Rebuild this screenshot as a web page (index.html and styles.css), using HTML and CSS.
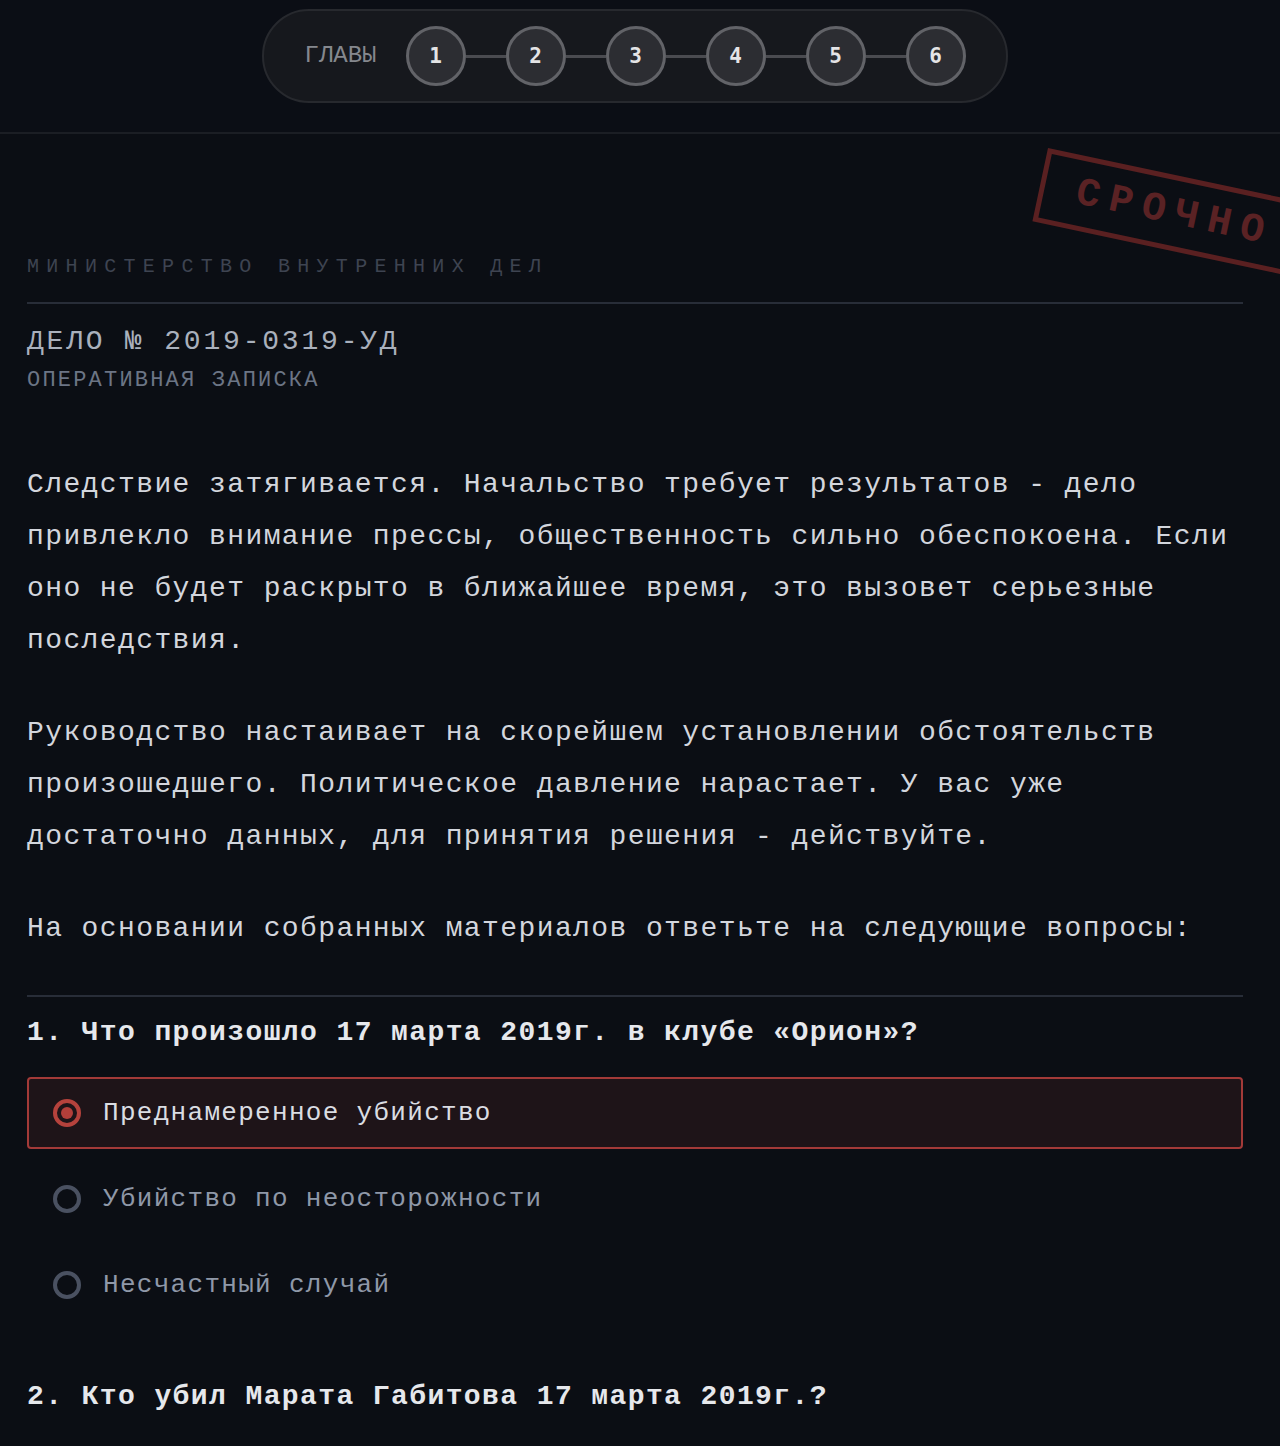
FILE: index.html
```html
<!DOCTYPE html>
<html lang="ru">
<head>
<meta charset="utf-8">
<title>Дело № 2019-0319-УД</title>
<link rel="stylesheet" href="styles.css">
</head>
<body>
<header class="topbar">
  <nav class="chapters">
    <span class="chapters-label">ГЛАВЫ</span>
    <ol class="chapter-list">
      <li class="chapter">1</li>
      <li class="link"></li>
      <li class="chapter">2</li>
      <li class="link"></li>
      <li class="chapter">3</li>
      <li class="link"></li>
      <li class="chapter">4</li>
      <li class="link"></li>
      <li class="chapter">5</li>
      <li class="link"></li>
      <li class="chapter">6</li>
    </ol>
  </nav>
</header>
<main class="doc">
  <div class="stamp"><span class="stamp-text">СРОЧНО</span></div>
  <div class="doc-org">МИНИСТЕРСТВО ВНУТРЕННИХ ДЕЛ</div>
  <div class="doc-case">ДЕЛО № 2019-0319-УД</div>
  <div class="doc-type">ОПЕРАТИВНАЯ ЗАПИСКА</div>

  <p class="doc-text">Следствие затягивается. Начальство требует результатов - дело привлекло внимание прессы, общественность сильно обеспокоена. Если оно не будет раскрыто в ближайшее время, это вызовет серьезные последствия.</p>
  <p class="doc-text">Руководство настаивает на скорейшем установлении обстоятельств произошедшего. Политическое давление нарастает. У вас уже достаточно данных, для принятия решения - действуйте.</p>
  <p class="doc-text">На основании собранных материалов ответьте на следующие вопросы:</p>

  <section class="quiz">
    <div class="question">
      <h2 class="question-title">1. Что произошло 17 марта 2019г. в клубе «Орион»?</h2>
      <div class="options">
        <label class="option selected"><span class="radio"></span><span class="option-text">Преднамеренное убийство</span></label>
        <label class="option"><span class="radio"></span><span class="option-text">Убийство по неосторожности</span></label>
        <label class="option"><span class="radio"></span><span class="option-text">Несчастный случай</span></label>
      </div>
    </div>
    <div class="question">
      <h2 class="question-title">2. Кто убил Марата Габитова 17 марта 2019г.?</h2>
    </div>
  </section>
</main>
</body>
</html>
```
FILE: styles.css
```css
* { box-sizing: border-box; }

html, body {
  margin: 0;
  padding: 0;
  background: #0b0e14;
}

body {
  font-family: "Courier New", "Nimbus Mono PS", "FreeMono", "Liberation Mono", monospace;
  color: #d3d6dd;
  overflow-x: hidden;
}

.topbar {
  height: 134px;
  padding: 9px 10px 0 0;
  border-bottom: 2px solid #1b1e24;
  display: flex;
  justify-content: center;
  align-items: flex-start;
  background: #0b0e15;
}

.chapters {
  height: 94px;
  display: flex;
  align-items: center;
  padding: 0 40px 0 40px;
  border: 2px solid #27292e;
  border-radius: 47px;
  background: #16181d;
}

.chapters-label {
  font-size: 24px;
  color: #85888e;
  margin-right: 29px;
  line-height: 1;
}

.chapter-list {
  list-style: none;
  margin: 0;
  padding: 0;
  display: flex;
  align-items: center;
}

.chapter {
  width: 60px;
  height: 60px;
  border-radius: 50%;
  border: 3px solid #626368;
  background: #2c2d32;
  color: #e4e4e6;
  font-family: "DejaVu Sans Mono", monospace;
  font-weight: bold;
  font-size: 21px;
  display: flex;
  align-items: center;
  justify-content: center;
}

.link {
  width: 40px;
  height: 3px;
  background: #4a4b50;
}

.doc {
  position: relative;
  overflow: hidden;
  padding: 116px 37px 60px 27px;
}

.stamp {
  position: absolute;
  left: 1048px;
  top: 14px;
  height: 75px;
  padding: 0 30px 0 32px;
  border: 5px solid #5a2021;
  transform-origin: 0 0;
  transform: rotate(12deg);
  display: flex;
  align-items: center;
}

.stamp-text {
  font-weight: bold;
  font-size: 40px;
  letter-spacing: 9.5px;
  color: #5a2224;
  line-height: 1;
}

.doc-org {
  font-size: 20px;
  line-height: 34px;
  letter-spacing: 7.3px;
  color: #3e4451;
  padding-bottom: 18px;
  border-bottom: 2px solid #282d38;
}

.doc-case {
  margin-top: 18px;
  font-size: 28px;
  line-height: 40px;
  letter-spacing: 2.8px;
  color: #a9b0bc;
}

.doc-type {
  margin-top: 4px;
  font-size: 22px;
  line-height: 30px;
  letter-spacing: 2.2px;
  color: #6c7585;
}

.doc-text {
  margin: 0 0 40px 0;
  font-size: 28px;
  line-height: 52px;
  letter-spacing: 1.4px;
  color: #d3d6dd;
}

.doc-text:first-of-type {
  margin-top: 63px;
}

.doc-text:last-of-type {
  margin-bottom: 0;
}

.quiz {
  margin-top: 40px;
  border-top: 2px solid #282d38;
}

.question {
  margin-bottom: 50px;
}

.question-title {
  margin: 10px 0 18px 0;
  font-size: 28px;
  line-height: 52px;
  letter-spacing: 1.4px;
  font-weight: bold;
  color: #e6e8ec;
}

.options {
  display: flex;
  flex-direction: column;
  gap: 14px;
}

.option {
  height: 72px;
  display: flex;
  align-items: center;
  padding-left: 24px;
  border: 2px solid transparent;
  border-radius: 4px;
}

.option.selected {
  border-color: #a33a38;
  background: #1e1418;
}

.radio {
  width: 28px;
  height: 28px;
  border-radius: 50%;
  border: 4px solid #4a5161;
  margin-right: 22px;
  flex: none;
  display: flex;
  align-items: center;
  justify-content: center;
}

.option.selected .radio {
  border-color: #b5423c;
}

.option.selected .radio::after {
  content: "";
  width: 12px;
  height: 12px;
  border-radius: 50%;
  background: #b23f3a;
}

.option-text {
  font-size: 26px;
  letter-spacing: 1.3px;
  color: #8f98a8;
}

.option.selected .option-text {
  color: #dadde2;
}
```
